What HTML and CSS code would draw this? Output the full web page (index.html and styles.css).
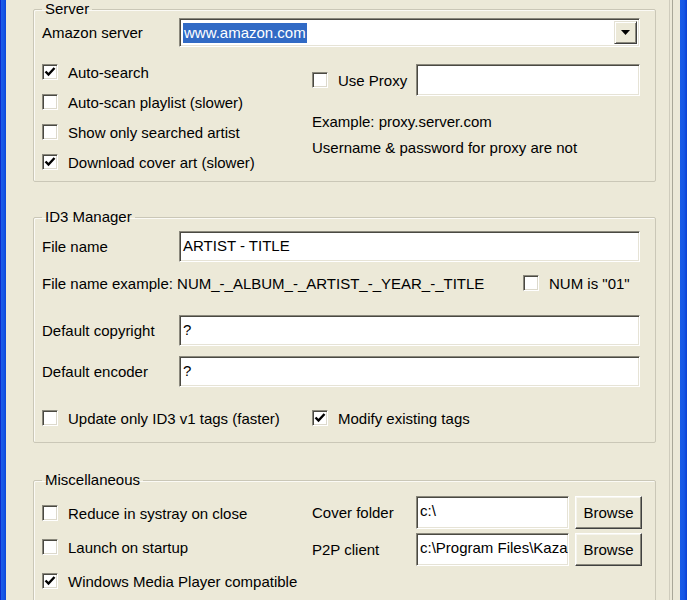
FILE: index.html
```html
<!DOCTYPE html>
<html lang="en">
<head>
  <meta charset="UTF-8" />
  <title>Options</title>
  <link rel="stylesheet" href="styles.css">
</head>
<body>
  <div class="frame frame-left"></div>

  <div class="client">
    <div class="sheet">
      <div class="page">

        <!-- Server -->
        <fieldset class="group group-server">
          <legend>Server</legend>
          <div class="field-row row-combo">
            <span class="field-label">Amazon server</span>
            <div class="combo">
              <span class="combo-value"><span class="selected">www.amazon.com</span></span>
              <span class="combo-btn">
                <svg width="9" height="5" viewBox="0 0 9 5"><path d="M0 0h9L4.5 5z" fill="#000"/></svg>
              </span>
            </div>
          </div>
          <div class="split">
            <div class="checks">
              <label class="check"><span class="box"><svg width="12" height="12" viewBox="0 0 12 12"><path d="M1.5 5.5l3 3 6-6.5" fill="none" stroke="#000" stroke-width="2.4"/></svg></span>Auto-search</label>
              <label class="check"><span class="box"></span>Auto-scan playlist (slower)</label>
              <label class="check"><span class="box"></span>Show only searched artist</label>
              <label class="check"><span class="box"><svg width="12" height="12" viewBox="0 0 12 12"><path d="M1.5 5.5l3 3 6-6.5" fill="none" stroke="#000" stroke-width="2.4"/></svg></span>Download cover art (slower)</label>
            </div>
            <div class="proxy">
              <div class="proxy-row">
                <label class="check"><span class="box"></span>Use Proxy</label>
                <div class="textbox"></div>
              </div>
              <p class="note first">Example: proxy.server.com</p>
              <p class="note">Username &amp; password for proxy are not</p>
            </div>
          </div>
        </fieldset>

        <!-- ID3 Manager -->
        <fieldset class="group group-id3">
          <legend>ID3 Manager</legend>
          <div class="field-row row-file">
            <span class="field-label">File name</span>
            <div class="textbox">ARTIST - TITLE</div>
          </div>
          <div class="example-row">
            <span>File name example: NUM_-_ALBUM_-_ARTIST_-_YEAR_-_TITLE</span>
            <label class="check"><span class="box"></span>NUM is "01"</label>
          </div>
          <div class="field-row row-copyright">
            <span class="field-label">Default copyright</span>
            <div class="textbox">?</div>
          </div>
          <div class="field-row row-encoder">
            <span class="field-label">Default encoder</span>
            <div class="textbox">?</div>
          </div>
          <div class="split row-tags">
            <label class="check"><span class="box"></span>Update only ID3 v1 tags (faster)</label>
            <label class="check"><span class="box"><svg width="12" height="12" viewBox="0 0 12 12"><path d="M1.5 5.5l3 3 6-6.5" fill="none" stroke="#000" stroke-width="2.4"/></svg></span>Modify existing tags</label>
          </div>
        </fieldset>

        <!-- Miscellaneous -->
        <fieldset class="group group-misc">
          <legend>Miscellaneous</legend>
          <div class="split">
            <div class="checks checks-wide">
              <label class="check"><span class="box"></span>Reduce in systray on close</label>
              <label class="check"><span class="box"></span>Launch on startup</label>
              <label class="check"><span class="box"><svg width="12" height="12" viewBox="0 0 12 12"><path d="M1.5 5.5l3 3 6-6.5" fill="none" stroke="#000" stroke-width="2.4"/></svg></span>Windows Media Player compatible</label>
            </div>
            <div class="paths">
              <div class="path-row">
                <span>Cover folder</span>
                <div class="textbox">c:\</div>
                <button class="btn">Browse</button>
              </div>
              <div class="path-row">
                <span>P2P client</span>
                <div class="textbox">c:\Program Files\Kazaa</div>
                <button class="btn">Browse</button>
              </div>
            </div>
          </div>
        </fieldset>

      </div>
    </div>
  </div>

  <div class="frame frame-right"></div>
</body>
</html>
```

FILE: styles.css
```css
html, body {
  margin: 0;
  height: 100%;
}
body {
  display: flex;
  height: 600px;
  overflow: hidden;
  background: #ece9d8;
  color: #000;
  font-family: "Liberation Sans", Arial, sans-serif;
  font-size: 15px;
}

/* window frame */
.frame { flex: 0 0 auto; }
.frame-left {
  width: 6px;
  background: linear-gradient(to right, #0a2ccc 0, #0a2ccc 1px, #1c5ee9 1px, #1454e4 4px, #0b47d8 6px);
}
.frame-right {
  width: 7px;
  background: linear-gradient(to right, #1a5ce8 0, #1657e6 4px, #0b3fd4 7px);
}
.client {
  flex: 1;
  display: flex;
}
.sheet {
  border-right: 1px solid #a9a798;
  padding-right: 2px;
}
.page {
  width: 623px;
  padding: 0 13px 0 27px;
  border-right: 1px solid #cfccbd;
}

/* group boxes */
.group {
  min-width: 0;
  margin: 0;
  padding: 0 15px 4px 8px;
  border: 1px solid #cac7b7;
  border-radius: 2px;
  box-shadow: inset 1px 1px 0 #fbfaf5;
}
.group legend {
  padding: 0 3px;
  line-height: 18px;
}
.group-id3 { margin-top: 26px; padding-bottom: 9px; }
.group-misc { margin-top: 28px; }

.field-row {
  display: grid;
  grid-template-columns: 137px 1fr;
  align-items: center;
}
.row-combo { height: 29px; }
.row-file { height: 31px; margin-top: 5px; }
.row-copyright { height: 31px; margin-top: 17px; }
.row-encoder { height: 31px; margin-top: 10px; }

.split {
  display: grid;
  grid-template-columns: 270px 1fr;
  margin-top: 10px;
}
.group-misc .split { margin-top: 7px; }
.row-tags {
  height: 30px;
  margin-top: 16px;
  align-items: center;
}

/* checkboxes */
.checks { display: flex; flex-direction: column; }
.checks .check { height: 30px; }
.checks-wide .check { height: 34px; }
.check {
  display: flex;
  align-items: center;
  gap: 10px;
  white-space: nowrap;
}
.box {
  flex: 0 0 auto;
  width: 14px;
  height: 14px;
  display: flex;
  align-items: center;
  justify-content: center;
  background: #fff;
  border: 1px solid;
  border-color: #8a887c #fff #fff #8a887c;
  box-shadow: inset 1px 1px 0 #4a4942, inset -1px -1px 0 #dcd9cc;
}

/* text boxes */
.textbox {
  box-sizing: border-box;
  height: 100%;
  padding: 5px 3px 0;
  background: #fff;
  border: 1px solid;
  border-color: #8a887c #fff #fff #8a887c;
  box-shadow: inset 1px 1px 0 #4a4942, inset -1px -1px 0 #e6e3d6;
  white-space: nowrap;
  overflow: hidden;
}

.combo {
  box-sizing: border-box;
  height: 100%;
  display: flex;
  align-items: center;
  padding: 2px;
  background: #fff;
  border: 1px solid;
  border-color: #8a887c #fff #fff #8a887c;
  box-shadow: inset 1px 1px 0 #4a4942, inset -1px -1px 0 #e6e3d6;
}
.combo-value { flex: 1; padding-left: 1px; }
.selected {
  display: inline-block;
  padding: 1px 1px 2px;
  background: #316ac5;
  color: #fff;
  line-height: 17px;
}
.combo-btn {
  box-sizing: border-box;
  width: 23px;
  height: 100%;
  display: flex;
  align-items: center;
  justify-content: center;
  background: #ece9d8;
  border: 1px solid;
  border-color: #e4e1d4 #404040 #404040 #e4e1d4;
  box-shadow: inset 1px 1px 0 #fff, inset -1px -1px 0 #8a887c;
}

/* proxy column */
.proxy { margin-top: 7px; }
.proxy-row {
  display: grid;
  grid-template-columns: 104px 1fr;
  height: 32px;
  align-items: center;
}
.note {
  margin: 0;
  line-height: 26px;
}
.note.first { margin-top: 13px; }

.example-row {
  display: grid;
  grid-template-columns: 481px auto;
  align-items: center;
  height: 30px;
  margin-top: 6px;
}

/* misc paths */
.paths { display: flex; flex-direction: column; gap: 5px; }
.path-row {
  display: grid;
  grid-template-columns: 104px 153px 73px;
  height: 32px;
  align-items: center;
}
.btn {
  height: 33px;
  margin-left: 6px;
  padding: 0;
  font: inherit;
  color: #000;
  background: #ece9d8;
  border: 1px solid;
  border-color: #fff #404040 #404040 #fff;
  box-shadow: inset -1px -1px 0 #8a887c, inset 1px 1px 0 #f6f5ee;
}
```
